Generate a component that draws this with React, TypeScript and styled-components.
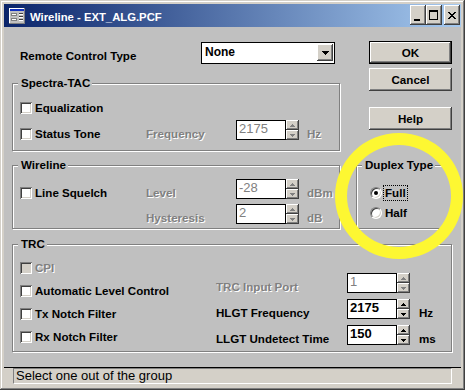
import React from "react";
import styled, { createGlobalStyle, css } from "styled-components";

const FACE = "#d4d0c8";
const BODY = "#c0c0c0";
const SHADOW = "#808080";
const DARK = "#404040";
const FONT = `"Liberation Sans", Arial, sans-serif`;

const GlobalStyle = createGlobalStyle`
  *, *::before, *::after { box-sizing: border-box; }
  html, body { margin: 0; padding: 0; background: ${BODY}; }
  body { font-family: ${FONT}; font-size: 11.6px; color: #000; }
  #root { width: 465px; height: 390px; }
`;

const raised = css`
  background: ${FACE};
  box-shadow: inset -1px -1px 0 ${DARK}, inset 1px 1px 0 #fff,
    inset -2px -2px 0 ${SHADOW};
`;

const disabledText = css`
  color: ${SHADOW};
  text-shadow: 1px 1px 0 #fff;
`;

const Window = styled.div`
  position: relative;
  width: 465px;
  height: 390px;
  padding: 4px;
  background: ${FACE};
  box-shadow: inset -1px -1px 0 ${DARK}, inset 1px 1px 0 ${FACE},
    inset -2px -2px 0 ${SHADOW}, inset 2px 2px 0 #fff;
  display: flex;
  flex-direction: column;
  overflow: hidden;
`;

/* ---------- title bar ---------- */
const TitleBar = styled.div`
  flex: none;
  height: 23px;
  display: flex;
  align-items: center;
  padding: 0 1px 0 5px;
  background: linear-gradient(to right, #0a246a, #a6caf0);
`;

const TitleText = styled.span`
  flex: 1;
  margin: 2px 0 0 5px;
  color: #fff;
  font-weight: 700;
  font-size: 11.3px;
  line-height: 14px;
  white-space: nowrap;
`;

const CaptionButtons = styled.div`
  display: flex;
  align-self: flex-start;
  margin-top: 1px;
`;

const CaptionButton = styled.div<{ $ml?: number }>`
  width: 16px;
  height: 20px;
  margin-left: ${(p) => p.$ml ?? 0}px;
  ${raised}
  svg {
    display: block;
  }
`;

const AppIcon = () => (
  <svg width="16" height="16" viewBox="0 0 16 16" shapeRendering="crispEdges">
    <rect x="0" y="0" width="16" height="16" fill="#ffffff" />
    <rect x="0" y="15" width="16" height="1" fill="#808080" />
    <rect x="15" y="0" width="1" height="16" fill="#808080" />
    <rect x="1" y="1" width="14" height="2" fill="#1030c0" />
    <rect x="1" y="3" width="14" height="12" fill="#c0c0c0" />
    <rect x="2" y="5" width="6" height="3" fill="#808080" />
    <rect x="3" y="6" width="4" height="1" fill="#ffffff" />
    <rect x="2" y="10" width="6" height="3" fill="#808080" />
    <rect x="3" y="11" width="4" height="1" fill="#ffffff" />
    <rect x="10" y="5" width="4" height="1" fill="#404040" />
    <rect x="10" y="8" width="4" height="1" fill="#404040" />
    <rect x="10" y="11" width="4" height="1" fill="#404040" />
    <rect x="10" y="6" width="4" height="1" fill="#ffffff" />
    <rect x="10" y="9" width="4" height="1" fill="#ffffff" />
    <rect x="10" y="12" width="4" height="1" fill="#ffffff" />
  </svg>
);

const MinGlyph = () => (
  <svg width="16" height="20" viewBox="0 0 16 20" shapeRendering="crispEdges">
    <rect x="4" y="14" width="6" height="2" fill="#000" />
  </svg>
);

const MaxGlyph = () => (
  <svg width="16" height="20" viewBox="0 0 16 20" shapeRendering="crispEdges">
    <rect x="3" y="5" width="9" height="2" fill="#000" />
    <rect x="3" y="5" width="1" height="10" fill="#000" />
    <rect x="11" y="5" width="1" height="10" fill="#000" />
    <rect x="3" y="14" width="9" height="1" fill="#000" />
  </svg>
);

const CloseGlyph = () => {
  const cells: React.ReactNode[] = [];
  for (let i = 0; i < 7; i++) {
    cells.push(<rect key={"a" + i} x={4 + i} y={7 + i} width="2" height="1" fill="#000" />);
    cells.push(<rect key={"b" + i} x={10 - i} y={7 + i} width="2" height="1" fill="#000" />);
  }
  return (
    <svg width="16" height="20" viewBox="0 0 16 20" shapeRendering="crispEdges">
      {cells}
    </svg>
  );
};

/* ---------- body ---------- */
const Main = styled.div`
  flex: 1;
  background: ${BODY};
  padding: 14px 9px 0 8px;
  display: flex;
  flex-direction: column;
`;

const TopSection = styled.div`
  display: grid;
  grid-template-columns: 328px 96px;
  column-gap: 16px;
`;

const LeftCol = styled.div`
  display: flex;
  flex-direction: column;
`;

const RightCol = styled.div`
  display: flex;
  flex-direction: column;
  align-items: stretch;
`;

const Text = styled.span<{ $disabled?: boolean; $w?: number; $ml?: number }>`
  flex: none;
  font-weight: 700;
  font-size: 11.6px;
  line-height: 14px;
  white-space: nowrap;
  ${(p) => p.$w !== undefined && css`width: ${p.$w}px;`}
  ${(p) => p.$ml !== undefined && css`margin-left: ${p.$ml}px;`}
  ${(p) => p.$disabled && disabledText}
`;

const RemoteRow = styled.div`
  display: flex;
  align-items: flex-start;
  height: 23px;
  padding-left: 8px;
`;

const RemoteLabel = styled(Text)`
  width: 181px;
  margin-top: 8px;
`;

const Combo = styled.div`
  width: 134px;
  height: 22px;
  margin-top: 1px;
  border: 1px solid #000;
  background: #fff;
  display: flex;
  align-items: flex-start;
  justify-content: space-between;
  padding: 1px 1px 0 3px;
`;

const ComboValue = styled.span`
  font-weight: 700;
  font-size: 12px;
  line-height: 17px;
`;

const ComboButton = styled.div`
  width: 16px;
  height: 17px;
  display: flex;
  align-items: center;
  justify-content: center;
  ${raised}
`;

const DownArrow = () => (
  <svg width="7" height="4" viewBox="0 0 7 4" shapeRendering="crispEdges">
    <rect x="0" y="0" width="7" height="1" fill="#000" />
    <rect x="1" y="1" width="5" height="1" fill="#000" />
    <rect x="2" y="2" width="3" height="1" fill="#000" />
    <rect x="3" y="3" width="1" height="1" fill="#000" />
  </svg>
);

const Group = styled.div<{ $mt: number; $pt: number; $pb: number; $gap: number; $pl?: number }>`
  position: relative;
  margin-top: ${(p) => p.$mt}px;
  border: 1px solid ${SHADOW};
  box-shadow: inset 1px 1px 0 #fff, 1px 1px 0 #fff;
  padding: ${(p) => p.$pt}px 7px ${(p) => p.$pb}px ${(p) => p.$pl ?? 7}px;
  display: flex;
  flex-direction: column;
  gap: ${(p) => p.$gap}px;
`;

const GroupTitle = styled.span`
  position: absolute;
  top: -8px;
  left: 5px;
  padding: 0 2px 0 3px;
  background: ${BODY};
  font-weight: 700;
  font-size: 11.6px;
  line-height: 14px;
  white-space: nowrap;
`;

const Row = styled.div`
  display: flex;
  align-items: center;
  height: 20px;
`;

const CheckRow = styled.div`
  display: flex;
  align-items: center;
  height: 12px;
`;

const CheckItem = styled.label<{ $w?: number }>`
  flex: none;
  display: flex;
  align-items: center;
  gap: 3px;
  ${(p) => p.$w !== undefined && css`width: ${p.$w}px;`}
`;

const CheckBox = styled.span<{ $disabled?: boolean }>`
  flex: none;
  width: 12px;
  height: 12px;
  background: ${(p) => (p.$disabled ? FACE : "#fff")};
  box-shadow: inset 1px 1px 0 ${SHADOW}, inset -1px -1px 0 #fff,
    inset 2px 2px 0 ${DARK}, inset -2px -2px 0 ${FACE};
`;

const Check = ({ label, disabled, width }: { label: string; disabled?: boolean; width?: number }) => (
  <CheckItem $w={width}>
    <CheckBox $disabled={disabled} />
    <Text $disabled={disabled}>{label}</Text>
  </CheckItem>
);

const SpinWrap = styled.div`
  flex: none;
  display: flex;
  margin-bottom: 8px;
`;

const SpinInput = styled.div<{ $disabled?: boolean }>`
  width: 50px;
  height: 20px;
  border: 1px solid #000;
  background: #fff;
  padding: 1px 2px 0;
  font-size: 13px;
  line-height: 14px;
  font-weight: ${(p) => (p.$disabled ? 400 : 700)};
  color: ${(p) => (p.$disabled ? SHADOW : "#000")};
`;

const SpinButtons = styled.div`
  width: 13px;
  height: 20px;
  display: flex;
  flex-direction: column;
`;

const SpinBtn = styled.div`
  flex: 1;
  display: flex;
  align-items: center;
  justify-content: center;
  ${raised}
`;

const SmallArrow = ({ up, disabled }: { up?: boolean; disabled?: boolean }) => {
  const c = disabled ? SHADOW : "#000";
  return (
    <svg width="5" height="3" viewBox="0 0 5 3" shapeRendering="crispEdges">
      {up ? (
        <>
          <rect x="2" y="0" width="1" height="1" fill={c} />
          <rect x="1" y="1" width="3" height="1" fill={c} />
          <rect x="0" y="2" width="5" height="1" fill={c} />
        </>
      ) : (
        <>
          <rect x="0" y="0" width="5" height="1" fill={c} />
          <rect x="1" y="1" width="3" height="1" fill={c} />
          <rect x="2" y="2" width="1" height="1" fill={c} />
        </>
      )}
    </svg>
  );
};

const Spin = ({ value, disabled }: { value: string; disabled?: boolean }) => (
  <SpinWrap>
    <SpinInput $disabled={disabled}>{value}</SpinInput>
    <SpinButtons>
      <SpinBtn>
        <SmallArrow up disabled={disabled} />
      </SpinBtn>
      <SpinBtn>
        <SmallArrow disabled={disabled} />
      </SpinBtn>
    </SpinButtons>
  </SpinWrap>
);

const PushButton = styled.button<{ $default?: boolean; $mt?: number }>`
  align-self: flex-end;
  width: 83px;
  height: 23px;
  margin: ${(p) => p.$mt ?? 0}px 0 0;
  padding: 0;
  font-family: ${FONT};
  font-weight: 700;
  font-size: 11.6px;
  color: #000;
  border: ${(p) => (p.$default ? "1px solid #000" : "none")};
  ${raised}
`;

const RadioRow = styled.div`
  display: flex;
  align-items: center;
  gap: 1px;
  height: 16px;
`;

const RadioCircle = styled.span<{ $checked?: boolean }>`
  flex: none;
  width: 12px;
  height: 12px;
  border-radius: 50%;
  background: #fff;
  border: 1px solid;
  border-color: ${SHADOW} #fff #fff ${SHADOW};
  box-shadow: inset 1px 1px 0 ${DARK}, inset -1px -1px 0 ${FACE};
  display: flex;
  align-items: center;
  justify-content: center;
  &::after {
    content: "";
    width: 4px;
    height: 4px;
    border-radius: 50%;
    background: #000;
    display: ${(p) => (p.$checked ? "block" : "none")};
  }
`;

const RadioLabel = styled.span<{ $focused?: boolean }>`
  border: 1px dotted ${(p) => (p.$focused ? "#000" : "transparent")};
  padding: 0 1px;
  font-weight: 700;
  font-size: 11.6px;
  line-height: 14px;
`;

const TrcGrid = styled.div`
  display: grid;
  grid-template-columns: 196px 1fr;
  align-items: start;
`;

const Stack = styled.div<{ $pt: number; $gap: number }>`
  display: flex;
  flex-direction: column;
  padding-top: ${(p) => p.$pt}px;
  gap: ${(p) => p.$gap}px;
`;

/* ---------- status ---------- */
const StatusBar = styled.div`
  flex: none;
  height: 19px;
  border-top: 1px solid #000;
  background: ${FACE};
  padding: 0 9px 2px;
`;

const StatusField = styled.div`
  height: 16px;
  border: 1px solid;
  border-color: ${SHADOW} #fff #fff ${SHADOW};
  padding: 0 2px;
  font-size: 13px;
  line-height: 14px;
  color: #000;
  white-space: nowrap;
`;

const Highlight = styled.div`
  position: absolute;
  left: 335px;
  top: 133px;
  width: 128px;
  height: 126px;
  border: 12px solid #fdf732;
  border-radius: 50%;
  pointer-events: none;
`;

export default function App() {
  return (
    <Window>
      <GlobalStyle />
      <TitleBar>
        <AppIcon />
        <TitleText>Wireline - EXT_ALG.PCF</TitleText>
        <CaptionButtons>
          <CaptionButton>
            <MinGlyph />
          </CaptionButton>
          <CaptionButton>
            <MaxGlyph />
          </CaptionButton>
          <CaptionButton $ml={2}>
            <CloseGlyph />
          </CaptionButton>
        </CaptionButtons>
      </TitleBar>

      <Main>
        <TopSection>
          <LeftCol>
            <RemoteRow>
              <RemoteLabel>Remote Control Type</RemoteLabel>
              <Combo>
                <ComboValue>None</ComboValue>
                <ComboButton>
                  <DownArrow />
                </ComboButton>
              </Combo>
            </RemoteRow>

            <Group $mt={19} $pt={14} $pb={6} $gap={6}>
              <GroupTitle>Spectra-TAC</GroupTitle>
              <Row>
                <Check label="Equalization" />
              </Row>
              <Row>
                <Check label="Status Tone" width={126} />
                <Text $disabled $w={90}>Frequency</Text>
                <Spin value="2175" disabled />
                <Text $disabled $ml={8}>Hz</Text>
              </Row>
            </Group>

            <Group $mt={14} $pt={17} $pb={0} $gap={5}>
              <GroupTitle>Wireline</GroupTitle>
              <Row>
                <Check label="Line Squelch" width={126} />
                <Text $disabled $w={90}>Level</Text>
                <Spin value="-28" disabled />
                <Text $disabled $ml={8}>dBm</Text>
              </Row>
              <Row>
                <Text $w={126} />
                <Text $disabled $w={90}>Hysteresis</Text>
                <Spin value="2" disabled />
                <Text $disabled $ml={8}>dB</Text>
              </Row>
            </Group>
          </LeftCol>

          <RightCol>
            <PushButton $default>OK</PushButton>
            <PushButton $mt={4}>Cancel</PushButton>
            <PushButton $mt={16}>Help</PushButton>
            <Group $mt={35} $pt={19} $pb={7} $gap={4} $pl={13}>
              <GroupTitle>Duplex Type</GroupTitle>
              <RadioRow>
                <RadioCircle $checked />
                <RadioLabel $focused>Full</RadioLabel>
              </RadioRow>
              <RadioRow>
                <RadioCircle />
                <RadioLabel>Half</RadioLabel>
              </RadioRow>
            </Group>
          </RightCol>
        </TopSection>

        <Group $mt={15} $pt={0} $pb={2} $gap={0}>
          <GroupTitle>TRC</GroupTitle>
          <TrcGrid>
            <Stack $pt={17} $gap={11}>
              <CheckRow>
                <Check label="CPI" disabled />
              </CheckRow>
              <CheckRow>
                <Check label="Automatic Level Control" />
              </CheckRow>
              <CheckRow>
                <Check label="Tx Notch Filter" />
              </CheckRow>
              <CheckRow>
                <Check label="Rx Notch Filter" />
              </CheckRow>
            </Stack>
            <Stack $pt={32} $gap={6}>
              <Row>
                <Text $disabled $w={131}>TRC Input Port</Text>
                <Spin value="1" disabled />
              </Row>
              <Row>
                <Text $w={131}>HLGT Frequency</Text>
                <Spin value="2175" />
                <Text $ml={9}>Hz</Text>
              </Row>
              <Row>
                <Text $w={131}>LLGT Undetect Time</Text>
                <Spin value="150" />
                <Text $ml={9}>ms</Text>
              </Row>
            </Stack>
          </TrcGrid>
        </Group>
      </Main>

      <StatusBar>
        <StatusField>Select one out of the group</StatusField>
      </StatusBar>

      <Highlight />
    </Window>
  );
}
